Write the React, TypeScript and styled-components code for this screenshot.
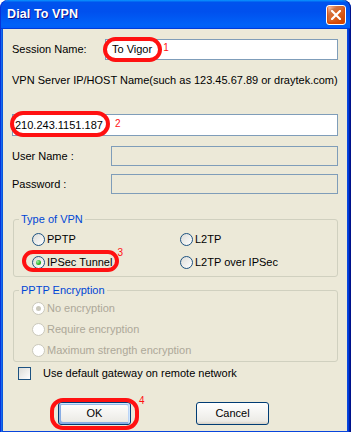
import React, { FC, ReactNode } from "react";
import styled, { createGlobalStyle } from "styled-components";

const COLORS = {
  face: "#ece9d8",
  edit: "#7f9db9",
  group: "#d0d0bf",
  legend: "#0046d5",
  disabled: "#aca899",
  mark: "#ff1111",
};

const GlobalStyle = createGlobalStyle`
  html, body {
    margin: 0;
    padding: 0;
    background: #ffffff;
  }
  body {
    font-family: "Liberation Sans", Arial, sans-serif;
    font-size: 11px;
    line-height: 13px;
    color: #000;
  }
  * {
    box-sizing: border-box;
  }
`;

interface RingBox {
  left: number;
  top: number;
  width: number;
  height: number;
}

// red hand-drawn annotation ring over a control
const Marked: FC<{ ring: RingBox; children: ReactNode }> = ({ ring, children }) => (
  <MarkWrap>
    {children}
    <Ring $l={ring.left} $t={ring.top} $w={ring.width} $h={ring.height} />
  </MarkWrap>
);

const Radio: FC<{ checked?: boolean; disabled?: boolean; label: string }> = ({
  checked,
  disabled,
  label,
}) => (
  <Option $disabled={disabled}>
    <RadioCircle $disabled={disabled}>{checked && <Dot $disabled={disabled} />}</RadioCircle>
    {label}
  </Option>
);

export default function App() {
  return (
    <>
      <GlobalStyle />
      <Window>
        <TitleBar>
          <TitleText>Dial To VPN</TitleText>
          <CloseButton>
            <svg width="10" height="10" viewBox="0 0 10 10">
              <path d="M1 1 L9 9 M9 1 L1 9" stroke="#fff" strokeWidth="2.2" strokeLinecap="square" />
            </svg>
          </CloseButton>
        </TitleBar>

        <Frame>
          <Client>
            <FieldRow $gap={0}>
              <Label $width={93}>Session Name:</Label>
              <TextBox $height={21} $indent={6}>
                <Marked ring={{ left: -9, top: -6, width: 59, height: 25 }}>
                  <Value>To Vigor</Value>
                </Marked>
                <Num $left={11} $lift={4}>1</Num>
              </TextBox>
            </FieldRow>

            <Caption>VPN Server IP/HOST Name(such as 123.45.67.89 or draytek.com)</Caption>

            <FieldRow $gap={27}>
              <TextBox $height={22} $indent={2}>
                <Marked ring={{ left: -5, top: -8, width: 100, height: 26 }}>
                  <Value>210.243.1151.187</Value>
                </Marked>
                <Num $left={12} $lift={3}>2</Num>
              </TextBox>
            </FieldRow>

            <FieldRow $gap={10}>
              <Label $width={99}>User Name :</Label>
              <TextBox $height={20} $disabled />
            </FieldRow>

            <FieldRow $gap={8}>
              <Label $width={99}>Password :</Label>
              <TextBox $height={20} $disabled />
            </FieldRow>

            <GroupBox $gap={19}>
              <Legend>Type of VPN</Legend>
              <OptionGrid $cols="148px auto" $row={23} $padTop={2} $padBottom={2}>
                <Radio label="PPTP" />
                <Radio label="L2TP" />
                <OptionCell>
                  <Marked ring={{ left: -10, top: -6, width: 97, height: 22 }}>
                    <Radio checked label="IPSec Tunnel" />
                  </Marked>
                  <Num $left={5} $lift={20}>3</Num>
                </OptionCell>
                <Radio label="L2TP over IPSec" />
              </OptionGrid>
            </GroupBox>

            <GroupBox $gap={7}>
              <Legend>PPTP Encryption</Legend>
              <OptionGrid $cols="auto" $row={21} $padTop={1} $padBottom={0}>
                <Radio checked disabled label="No encryption" />
                <Radio disabled label="Require encryption" />
                <Radio disabled label="Maximum strength encryption" />
              </OptionGrid>
            </GroupBox>

            <CheckRow>
              <CheckBox />
              Use default gateway on remote network
            </CheckRow>

            <ButtonRow>
              <ButtonSlot>
                <Marked ring={{ left: -8, top: -4, width: 89, height: 32 }}>
                  <Button $default>OK</Button>
                </Marked>
                <Num $left={8} $lift={25}>4</Num>
              </ButtonSlot>
              <Button>Cancel</Button>
            </ButtonRow>
          </Client>
        </Frame>
      </Window>
    </>
  );
}

const Window = styled.div`
  width: 351px;
  height: 432px;
  display: flex;
  flex-direction: column;
`;

const TitleBar = styled.div`
  height: 29px;
  flex: none;
  display: flex;
  align-items: center;
  justify-content: space-between;
  padding: 0 5px 0 7px;
  border-radius: 8px 8px 0 0;
  background: linear-gradient(
    180deg,
    #0997ff,
    #0053ee 8%,
    #0050ee 40%,
    #0062f8 86%,
    #0060f5 92%,
    #005bff 95%,
    #003dd7 97%,
    #003dd7
  );
  box-shadow: inset 1px 0 #0831d9, inset -1px 0 #00138c;
`;

const TitleText = styled.span`
  color: #fff;
  font-weight: bold;
  font-size: 12.5px;
  letter-spacing: 0.1px;
  text-shadow: 1px 1px #0f1089;
`;

const CloseButton = styled.div`
  width: 20px;
  height: 20px;
  display: flex;
  align-items: center;
  justify-content: center;
  border: 1px solid #fff;
  border-radius: 3px;
  background: radial-gradient(
    circle at 90% 90%,
    #cc4600 0%,
    #dc6527 55%,
    #cd7546 70%,
    #ffccb2 90%,
    #fff 100%
  );
  box-shadow: inset 0 -1px 2px 1px #da4600;
`;

const Frame = styled.div`
  flex: 1;
  display: flex;
  padding: 0 4px 5px 3px;
  background: #0845dc;
  box-shadow: inset -1px -1px #00138c, inset 1px 0 #0831d9, inset -2px -2px #001ea0,
    inset 2px 0 #166aee, inset -3px -3px #003bda, inset 3px 0 #0855dd;
`;

const Client = styled.div`
  flex: 1;
  display: flex;
  flex-direction: column;
  padding: 10px 9px 0 9px;
  background: ${COLORS.face};
`;

const FieldRow = styled.div<{ $gap: number }>`
  display: flex;
  align-items: center;
  margin-top: ${({ $gap }) => $gap}px;
`;

const Label = styled.span<{ $width: number }>`
  flex: none;
  width: ${({ $width }) => $width}px;
`;

const TextBox = styled.div<{ $height: number; $indent?: number; $disabled?: boolean }>`
  flex: 1;
  height: ${({ $height }) => $height}px;
  display: flex;
  align-items: center;
  padding-left: ${({ $indent }) => $indent ?? 2}px;
  border: 1px solid ${COLORS.edit};
  background: ${({ $disabled }) => ($disabled ? COLORS.face : "#fff")};
`;

const Value = styled.span`
  white-space: nowrap;
`;

const Caption = styled.div`
  margin-top: 14px;
  white-space: nowrap;
`;

const MarkWrap = styled.span`
  position: relative;
  display: inline-flex;
  align-items: center;
`;

const Ring = styled.span<{ $l: number; $t: number; $w: number; $h: number }>`
  position: absolute;
  left: ${({ $l }) => $l}px;
  top: ${({ $t }) => $t}px;
  width: ${({ $w }) => $w}px;
  height: ${({ $h }) => $h}px;
  border: 4px solid ${COLORS.mark};
  border-radius: 13px;
  pointer-events: none;
`;

const Num = styled.span<{ $left: number; $lift: number }>`
  color: ${COLORS.mark};
  font-size: 10px;
  line-height: 10px;
  margin-left: ${({ $left }) => $left}px;
  margin-bottom: ${({ $lift }) => $lift}px;
`;

const GroupBox = styled.fieldset<{ $gap: number }>`
  margin: ${({ $gap }) => $gap}px 0 0 1px;
  padding: 0;
  min-width: 0;
  border: 1px solid ${COLORS.group};
  border-radius: 3px;
`;

const Legend = styled.legend`
  margin-left: 5px;
  padding: 0 2px;
  line-height: 13px;
  color: ${COLORS.legend};
`;

const OptionGrid = styled.div<{ $cols: string; $row: number; $padTop: number; $padBottom: number }>`
  display: grid;
  grid-template-columns: ${({ $cols }) => $cols};
  grid-auto-rows: ${({ $row }) => $row}px;
  align-items: center;
  padding: ${({ $padTop }) => $padTop}px 0 ${({ $padBottom }) => $padBottom}px 18px;
`;

const OptionCell = styled.div`
  display: flex;
  align-items: center;
  height: 100%;
`;

const Option = styled.span<{ $disabled?: boolean }>`
  display: inline-flex;
  align-items: center;
  white-space: nowrap;
  color: ${({ $disabled }) => ($disabled ? COLORS.disabled : "#000")};
`;

const RadioCircle = styled.span<{ $disabled?: boolean }>`
  flex: none;
  width: 13px;
  height: 13px;
  margin-right: 2px;
  display: flex;
  align-items: center;
  justify-content: center;
  border-radius: 50%;
  border: 1px solid ${({ $disabled }) => ($disabled ? "#cac8bb" : "#1d5281")};
  background: ${({ $disabled }) =>
    $disabled ? "#fff" : "linear-gradient(135deg, #dcdcd7, #fff)"};
`;

const Dot = styled.span<{ $disabled?: boolean }>`
  width: 5px;
  height: 5px;
  border-radius: 50%;
  background: ${({ $disabled }) =>
    $disabled ? "#cac8bb" : "radial-gradient(circle at 35% 35%, #a6f0a6, #2db52d 55%, #128a12)"};
`;

const CheckRow = styled.label`
  display: flex;
  align-items: center;
  height: 13px;
  margin: 5px 0 0 6px;
  white-space: nowrap;
`;

const CheckBox = styled.span`
  flex: none;
  width: 13px;
  height: 13px;
  margin-right: 12px;
  border: 1px solid #1d5281;
  background: linear-gradient(135deg, #dcdcd7, #fff);
`;

const ButtonRow = styled.div`
  display: flex;
  align-items: center;
  margin-top: 16px;
  padding-left: 46px;
`;

const ButtonSlot = styled.div`
  width: 138px;
  display: flex;
  align-items: center;
`;

const Button = styled.button<{ $default?: boolean }>`
  width: 73px;
  height: 23px;
  padding: 0;
  font: inherit;
  color: #000;
  border: 1px solid #003c74;
  border-radius: 3px;
  background: linear-gradient(180deg, #fff, #ecebe6 86%, #d6d0c5);
  box-shadow: ${({ $default }) =>
    $default
      ? "inset -1px 1px #cee7ff, inset 1px 2px #98b8ea, inset -2px 2px #bcd4f6, inset 1px -1px #89ade4, inset 2px -2px #89ade4"
      : "none"};
`;
